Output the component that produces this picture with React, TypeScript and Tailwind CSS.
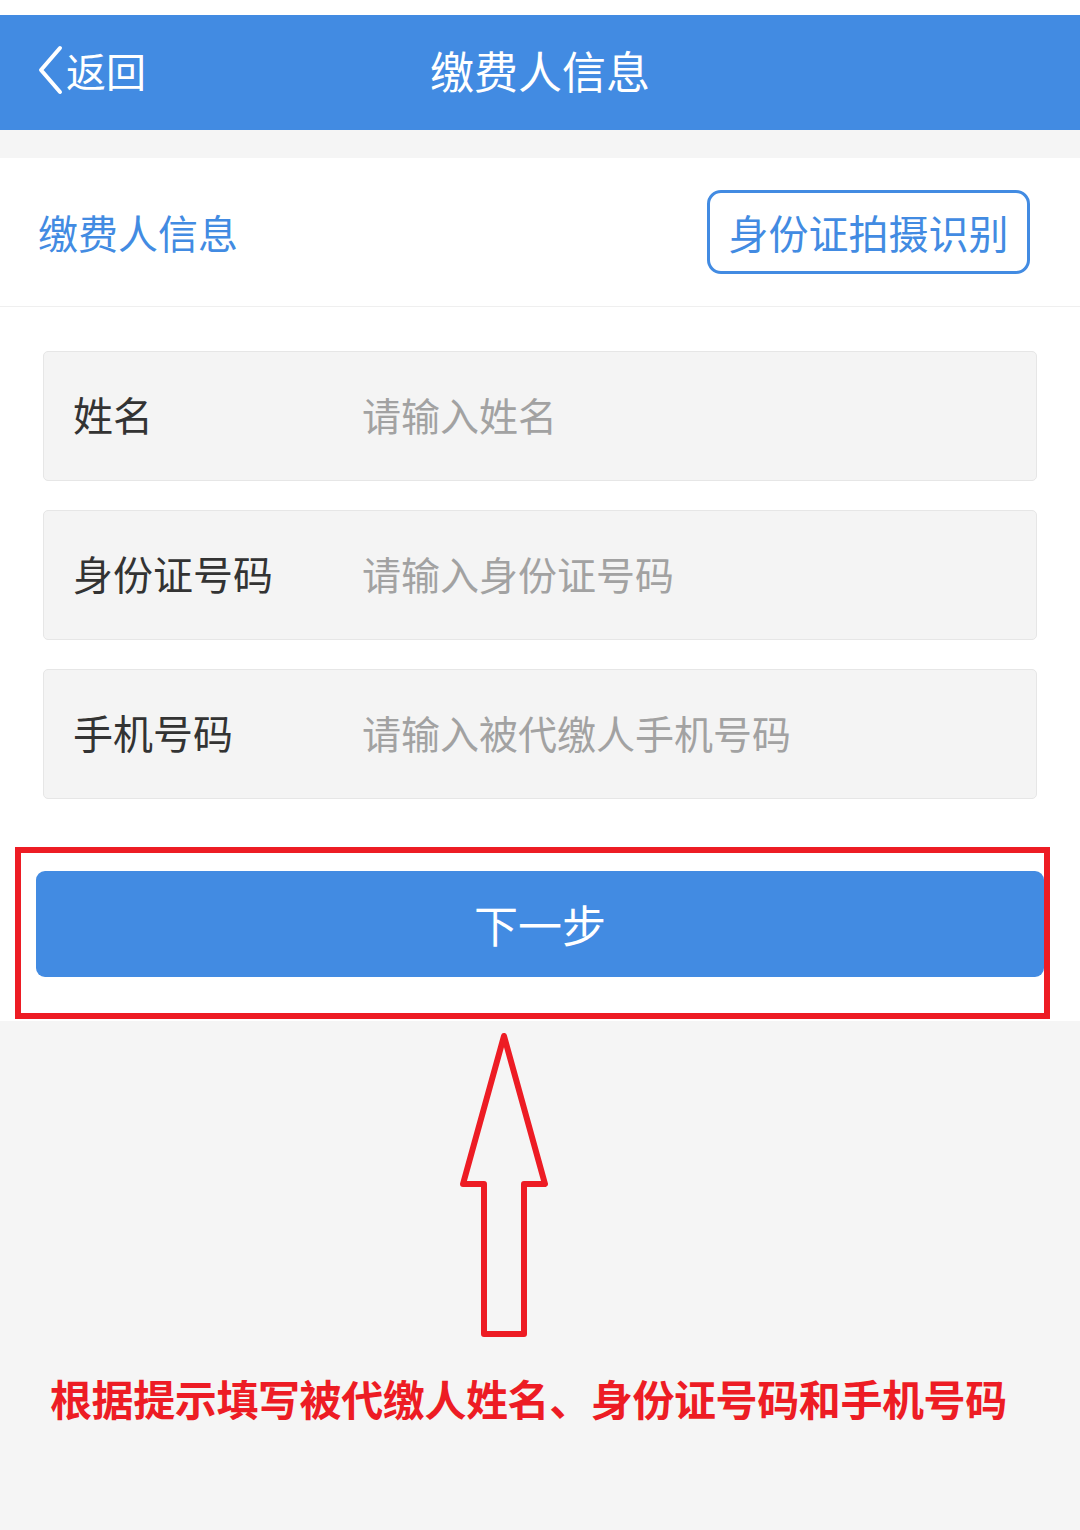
import React from 'react';

const fields = [
  { label: '姓名', placeholder: '请输入姓名' },
  { label: '身份证号码', placeholder: '请输入身份证号码' },
  { label: '手机号码', placeholder: '请输入被代缴人手机号码' },
];

const App: React.FC = () => {
  return (
    <div
      className="min-h-[1530px] w-[1080px] bg-[#f5f5f5]"
      style={{ fontFamily: '"Noto Sans CJK SC", "Noto Sans", sans-serif' }}
    >
      <div className="h-[15px] bg-white"></div>
      <header className="relative flex h-[115px] items-center bg-[#428be2] pb-[6px] text-white">
        <button className="flex items-center pl-[36px]">
          <svg width="30" height="52" viewBox="0 0 30 52" fill="none">
            <path d="M24 4 L5 26 L24 48" stroke="white" strokeWidth="4" strokeLinecap="round" strokeLinejoin="round" />
          </svg>
          <span className="text-[40px] leading-none">返回</span>
        </button>
        <h1 className="absolute left-1/2 -translate-x-1/2 text-[44px] leading-none">缴费人信息</h1>
      </header>

      <div className="h-[28px]"></div>

      <section className="bg-white pb-[2px]">
        <div className="flex h-[149px] items-center justify-between border-b border-[#efefef] pl-[38px] pr-[50px]">
          <h2 className="text-[40px] leading-none text-[#428be2]">缴费人信息</h2>
          <button className="flex h-[84px] w-[323px] items-center justify-center rounded-[14px] border-[3px] border-[#428be2] text-[40px] leading-none text-[#428be2]">
            身份证拍摄识别
          </button>
        </div>

        <div className="flex flex-col gap-[29px] px-[43px] pt-[44px]">
          {fields.map(f => (
            <div
              key={f.label}
              className="flex h-[130px] items-center rounded-[5px] border border-[#e6e6e6] bg-[#f4f4f4] pb-[4px]"
            >
              <span className="w-[318px] shrink-0 pl-[29px] text-[40px] leading-none text-[#333333]">{f.label}</span>
              <span className="text-[39px] leading-none text-[#a2a2a2]">{f.placeholder}</span>
            </div>
          ))}
        </div>

        <div className="ml-[15px] mt-[48px] w-[1035px] border-[6px] border-[#ed1c24] pb-[36px] pl-[15px] pt-[18px]">
          <button className="flex h-[106px] w-full items-center justify-center rounded-[9px] bg-[#428be2] text-[44px] leading-none text-white">
            下一步
          </button>
        </div>
      </section>

      <div className="pl-[454px] pt-[8px]">
        <svg width="100" height="310" viewBox="0 0 100 310" fill="none">
          <path
            d="M50 7 L91 155 L70 155 L70 305 L30 305 L30 155 L9 155 Z"
            stroke="#ed1c24"
            strokeWidth="6"
            strokeLinejoin="round"
          />
        </svg>
      </div>

      <p className="mt-[34px] whitespace-nowrap pl-[50px] text-[42px] font-bold leading-[50px] tracking-[-0.4px] text-[#ed1c24]">
        根据提示填写被代缴人姓名、身份证号码和手机号码
      </p>
    </div>
  );
};

export default App;
